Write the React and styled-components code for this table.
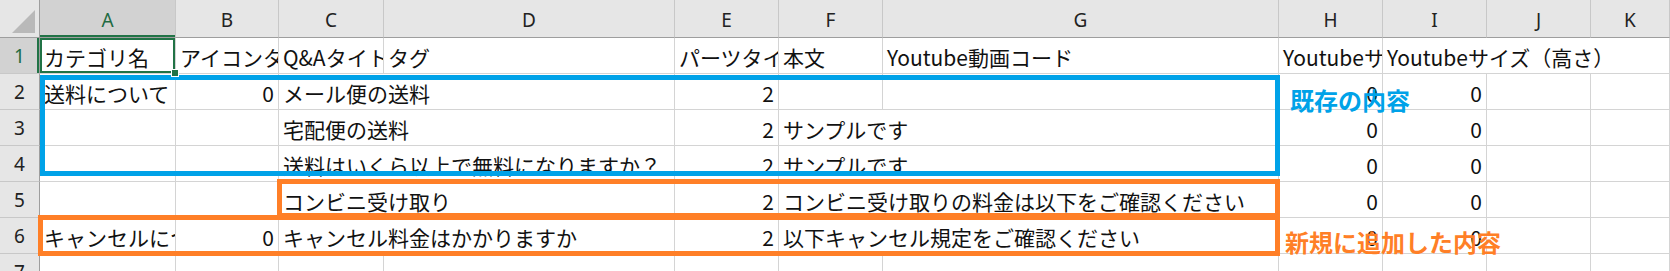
import React from 'react';
import styled, { createGlobalStyle } from 'styled-components';

const GlobalStyle = createGlobalStyle`
  html, body {
    margin: 0;
    padding: 0;
    background: #ffffff;
    overflow: hidden;
  }
  body {
    font-family: "Noto Sans CJK JP", "Noto Sans", sans-serif;
  }
`;

const COLS = '40px 136px 103px 105px 291px 104px 104px 396px 104px 104px 104px 79px';

const Sheet = styled.div`
  position: relative;
  width: 1670px;
  height: 271px;
  overflow: hidden;
  background: #fff;
`;

const Row = styled.div`
  display: grid;
  grid-template-columns: ${COLS};
  height: ${(p) => p.$h || 36}px;
`;

const Corner = styled.div`
  position: relative;
  background: #e6e6e6;
  border-right: 1px solid #9e9e9e;
  border-bottom: 1px solid #9e9e9e;
  overflow: hidden;

  &::after {
    content: '';
    position: absolute;
    right: 4px;
    bottom: 4px;
    width: 0;
    height: 0;
    border-left: 23px solid transparent;
    border-bottom: 23px solid #b9b9b9;
  }
`;

const ColHead = styled.div`
  display: flex;
  align-items: center;
  justify-content: center;
  padding-top: 3px;
  background: ${(p) => (p.$selected ? '#d2d2d2' : '#e6e6e6')};
  border-right: 1px solid #c8c8c8;
  border-bottom: 1px solid #9e9e9e;
  color: ${(p) => (p.$selected ? '#1f6b42' : '#222')};
  font-family: "Noto Sans", sans-serif;
  font-size: 19px;
  line-height: 1;
  box-shadow: ${(p) => (p.$selected ? 'inset 0 -2px 0 #217346' : 'none')};
`;

const RowHead = styled.div`
  display: flex;
  align-items: center;
  justify-content: center;
  padding-top: 2px;
  background: ${(p) => (p.$selected ? '#d2d2d2' : '#e6e6e6')};
  border-right: 1px solid #9e9e9e;
  border-bottom: 1px solid #c8c8c8;
  color: ${(p) => (p.$selected ? '#1f6b42' : '#222')};
  font-family: "Noto Sans", sans-serif;
  font-size: 19px;
  line-height: 1;
  box-shadow: ${(p) => (p.$selected ? 'inset -2px 0 0 #217346' : 'none')};
`;

const Cell = styled.div`
  position: relative;
  grid-column: span ${(p) => p.$span || 1};
  display: flex;
  align-items: center;
  justify-content: ${(p) => (p.$num ? 'flex-end' : 'flex-start')};
  padding: 4px 4px 0 4px;
  border-right: 1px solid #d4d4d4;
  border-bottom: 1px solid #d4d4d4;
  font-size: 21px;
  line-height: 1;
  color: #111;
  white-space: nowrap;
  min-width: 0;
  box-shadow: ${(p) => (p.$selected ? 'inset 0 0 0 2px #217346' : 'none')};
  overflow: ${(p) => (p.$selected ? 'visible' : 'hidden')};

  ${(p) =>
    p.$selected &&
    `
    &::after {
      content: '';
      position: absolute;
      right: -4px;
      bottom: -4px;
      width: 6px;
      height: 6px;
      background: #217346;
      border: 1px solid #fff;
      z-index: 2;
    }
  `}
`;

// frames drawn over the sheet to mark groups of rows
const Frame = styled.div`
  position: absolute;
  left: ${(p) => p.$x}px;
  top: ${(p) => p.$y}px;
  width: ${(p) => p.$w}px;
  height: ${(p) => p.$h}px;
  border: 5px solid ${(p) => p.$color};
  box-sizing: border-box;
  pointer-events: none;
`;

const Note = styled.div`
  position: absolute;
  left: ${(p) => p.$x}px;
  top: ${(p) => p.$y}px;
  color: ${(p) => p.$color};
  font-size: 24px;
  font-weight: 700;
  line-height: 1;
  white-space: nowrap;
`;

const BLUE = '#00a2e8';
const ORANGE = '#ff7f27';

const letters = ['A', 'B', 'C', 'D', 'E', 'F', 'G', 'H', 'I', 'J', 'K'];

// each row: [text, span, numeric, selected]
const rows = [
  [
    ['カテゴリ名', 1, false, true],
    ['アイコンタイプ', 1],
    ['Q&Aタイトル', 1],
    ['タグ', 1],
    ['パーツタイプ', 1],
    ['本文', 1],
    ['Youtube動画コード', 1],
    ['Youtubeサイズ（幅）', 1],
    ['Youtubeサイズ（高さ）', 3],
  ],
  [
    ['送料について', 1],
    ['0', 1, true],
    ['メール便の送料', 2],
    ['2', 1, true],
    ['', 1],
    ['', 1],
    ['0', 1, true],
    ['0', 1, true],
    ['', 1],
    ['', 1],
  ],
  [
    ['', 1],
    ['', 1],
    ['宅配便の送料', 2],
    ['2', 1, true],
    ['サンプルです', 2],
    ['0', 1, true],
    ['0', 1, true],
    ['', 1],
    ['', 1],
  ],
  [
    ['', 1],
    ['', 1],
    ['送料はいくら以上で無料になりますか？', 2],
    ['2', 1, true],
    ['サンプルです', 2],
    ['0', 1, true],
    ['0', 1, true],
    ['', 1],
    ['', 1],
  ],
  [
    ['', 1],
    ['', 1],
    ['コンビニ受け取り', 2],
    ['2', 1, true],
    ['コンビニ受け取りの料金は以下をご確認ください', 2],
    ['0', 1, true],
    ['0', 1, true],
    ['', 1],
    ['', 1],
  ],
  [
    ['キャンセルについて', 1],
    ['0', 1, true],
    ['キャンセル料金はかかりますか', 2],
    ['2', 1, true],
    ['以下キャンセル規定をご確認ください', 2],
    ['0', 1, true],
    ['0', 1, true],
    ['', 1],
    ['', 1],
  ],
  [
    ['', 1],
    ['', 1],
    ['', 1],
    ['', 1],
    ['', 1],
    ['', 1],
    ['', 1],
    ['', 1],
    ['', 1],
    ['', 1],
    ['', 1],
  ],
];

export default function App() {
  return (
    <>
      <GlobalStyle />
      <Sheet>
        <Row $h={38}>
          <Corner />
          {letters.map((l) => (
            <ColHead key={l} $selected={l === 'A'}>
              {l}
            </ColHead>
          ))}
        </Row>
        {rows.map((cells, i) => (
          <Row key={i}>
            <RowHead $selected={i === 0}>{i + 1}</RowHead>
            {cells.map(([text, span, num, sel], j) => (
              <Cell key={j} $span={span} $num={num} $selected={sel}>
                {text}
              </Cell>
            ))}
          </Row>
        ))}

        <Frame $x={40} $y={75} $w={1240} $h={101} $color={BLUE} />
        <Frame $x={277} $y={179} $w={1003} $h={39} $color={ORANGE} />
        <Frame $x={38} $y={215} $w={1242} $h={41} $color={ORANGE} />
        <Note $x={1290} $y={88} $color={BLUE}>既存の内容</Note>
        <Note $x={1285} $y={230} $color={ORANGE}>新規に追加した内容</Note>
      </Sheet>
    </>
  );
}
